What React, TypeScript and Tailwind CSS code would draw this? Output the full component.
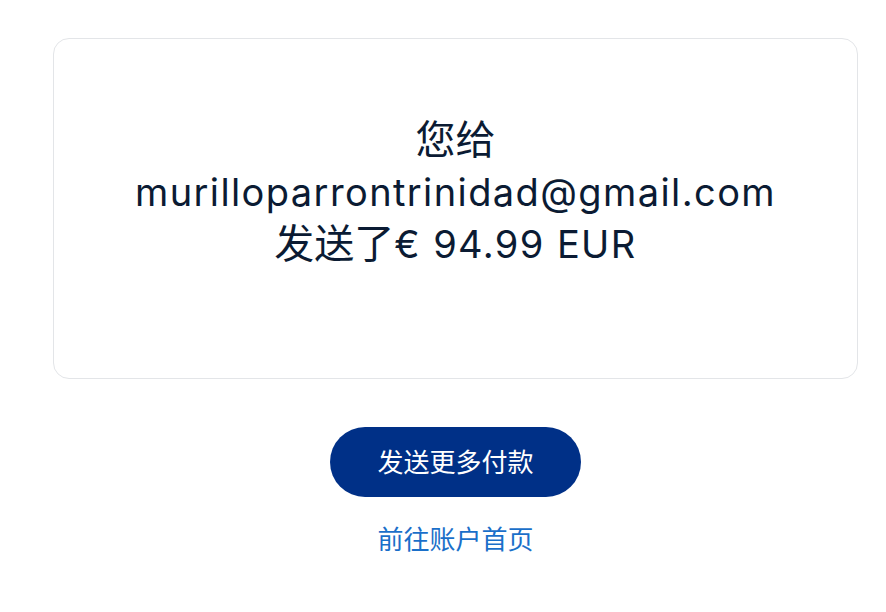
import React from 'react';

const SANS = 'font-[Inter,"Noto_Sans_CJK_SC",sans-serif]';

export default function App() {
  return (
    <div className={`min-h-screen bg-white ${SANS}`}>
      <div className="ml-[53px] w-[805px] pt-[38px] flex flex-col items-center">
        {/* Confirmation card */}
        <div className="w-full h-[341px] rounded-2xl border border-[#e3e5e8] pt-[75px] text-center text-[#0b1b33]">
          <p className="text-[38px] leading-[52px] tracking-[1.4px]">
            <span className="text-[40px] tracking-normal">您给</span>
            <br />
            murilloparrontrinidad@gmail.com
            <br />
            <span className="text-[40px] tracking-normal">发送了</span>€ 94.99 EUR
          </p>
        </div>

        <button className="mt-[48px] w-[251px] h-[70px] rounded-full bg-[#003087] text-white text-[26px]">
          发送更多付款
        </button>

        <a href="#" className="mt-[25px] text-[26px] leading-[36px] text-[#1a6fc9]">
          前往账户首页
        </a>
      </div>
    </div>
  );
}
